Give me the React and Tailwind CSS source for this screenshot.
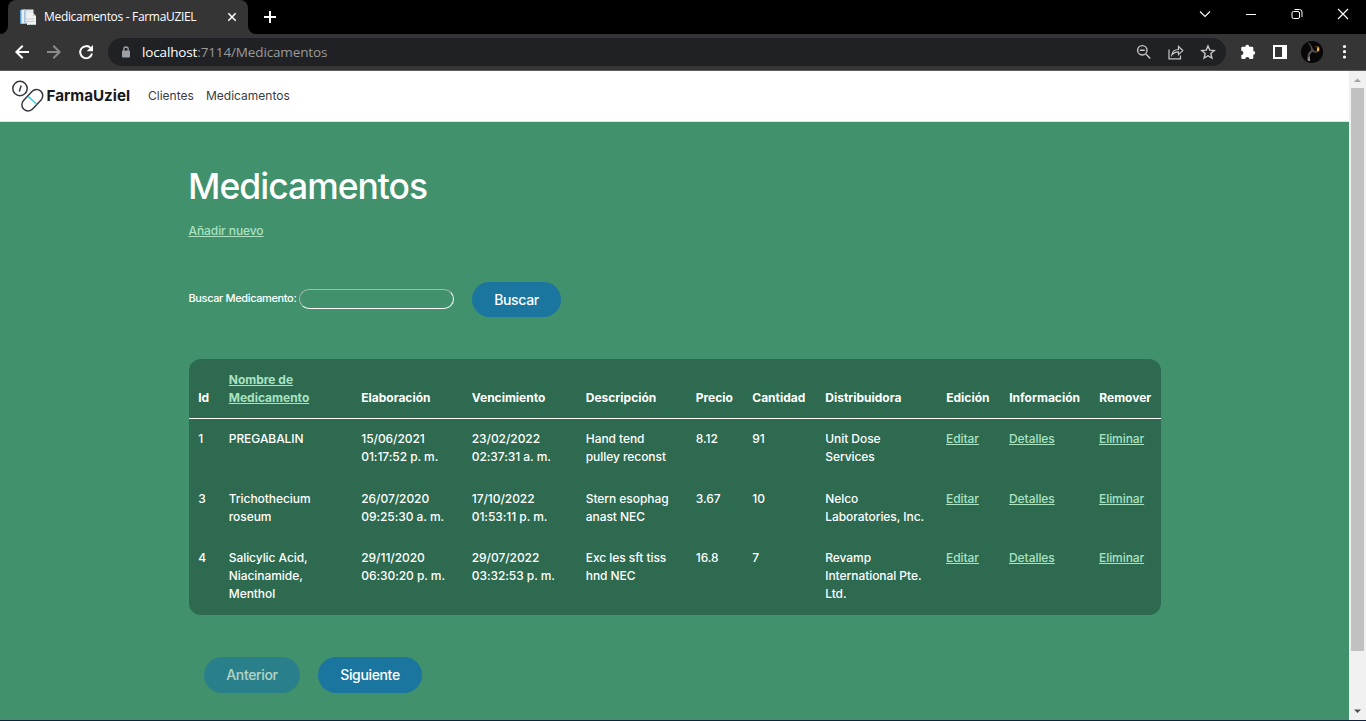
import React from "react";

const link = "text-[#aae2c2] underline underline-offset-[1px]";

const rows = [
  ["1", "PREGABALIN", "15/06/2021\n01:17:52 p. m.", "23/02/2022\n02:37:31 a. m.", "Hand tend\npulley reconst", "8.12", "91", "Unit Dose\nServices"],
  ["3", "Trichothecium\nroseum", "26/07/2020\n09:25:30 a. m.", "17/10/2022\n01:53:11 p. m.", "Stern esophag\nanast NEC", "3.67", "10", "Nelco\nLaboratories, Inc."],
  ["4", "Salicylic Acid,\nNiacinamide,\nMenthol", "29/11/2020\n06:30:20 p. m.", "29/07/2022\n03:32:53 p. m.", "Exc les sft tiss\nhnd NEC", "16.8", "7", "Revamp\nInternational Pte.\nLtd."],
];
const rowHeights = ["h-[60px]", "h-[59px]", "h-[76px]"];
const heads = ["Id", "Nombre de\nMedicamento", "Elaboración", "Vencimiento", "Descripción", "Precio", "Cantidad", "Distribuidora", "Edición", "Información", "Remover"];
const cols = "grid grid-cols-[30.5px_132.5px_110.5px_114px_110px_56.5px_73px_121px_63px_90px_71px]";

function TabStrip() {
  return (
    <div className="flex h-[34px] bg-black text-white">
      <svg width="8" height="34" className="shrink-0"><path d="M8 26v8H0a8 8 0 0 0 8-8Z" fill="#353535" /></svg>
      <div className="flex h-[34px] w-[240px] shrink-0 items-center rounded-t-lg bg-[#353535] pl-3 pr-[11px]">
        <svg width="16" height="17" viewBox="0 0 16 17" className="shrink-0">
          <path d="M0 1h5v14H0Z" fill="#5b9fd0" /><path d="M1.500 0.500H5v14H1.500Z" fill="#e3f0f8" />
          <path d="M4 .500h9.500v14H4Z" fill="#e3e7ea" /><path d="M4 1h1.500v14H4Z" fill="#a5c4da" />
          <path d="M7 4h6l3 3v9H7Z" fill="#f1f1f1" /><path d="M13 4v3h3Z" fill="#c3cacf" />
          <path d="M6.500 10h8M6.500 12.500h8M8 15.500h8" stroke="#c5cacf" />
        </svg>
        <span className="ml-2 w-[175px] whitespace-nowrap font-['Open_Sans',sans-serif] text-[12px] tracking-[-0.320px]">Medicamentos - FarmaUZIEL</span>
        <svg width="10" height="10" viewBox="0 0 10 10" className="ml-auto shrink-0"><path d="m1.300 1.300 7.400 7.400M8.700 1.300 1.300 8.700" stroke="#fff" strokeWidth="1.500" /></svg>
      </div>
      <svg width="8" height="34" className="shrink-0"><path d="M0 26v8h8a8 8 0 0 1-8-8Z" fill="#353535" /></svg>
      <svg width="12" height="12" viewBox="0 0 12 12" className="ml-2 mt-[11px]"><path d="M6 0v12M0 6h12" stroke="#fff" strokeWidth="2" /></svg>
      <svg width="168" height="34" viewBox="0 0 168 34" className="ml-auto" fill="none" stroke="#fff">
        <path d="m2 11.500 5 5 5-5" strokeWidth="1.100" />
        <path d="M48 14.500h10" />
        <path d="M95.500 11.500h4.500q1.500 0 1.500 1.500v4q0 1.500-1.500 1.500h-4.500q-1.500 0-1.500-1.500v-4q0-1.500 1.500-1.500Z M96.500 9.500h5q2.500 0 2.500 2.500v5" />
        <path d="m140 9 10 10m0-10-10 10" strokeWidth="1.200" />
      </svg>
    </div>
  );
}

function Toolbar() {
  return (
    <div className="flex h-[37px] items-center border-b border-[#5c5c5c] bg-[#353535] text-white">
      <svg width="108" height="36" viewBox="0 0 108 36" fill="none" className="shrink-0">
        <path d="M29 18H16.500m6.200-6.300L16.400 18l6.300 6.300" stroke="#fff" strokeWidth="2" />
        <path d="M47 18h12.500m-6.200-6.300 6.300 6.300-6.300 6.300" stroke="#8a8a8a" strokeWidth="2" />
        <path d="M90.700 14.200A6 6 0 1 0 92 19.500" stroke="#fff" strokeWidth="2" />
        <path d="M93 11v6.300h-6.300Z" fill="#fff" />
      </svg>
      <div className="flex h-[28px] w-[1118px] shrink-0 items-center rounded-full bg-[#202124]">
        <svg width="8" height="12" viewBox="0 0 8 12" className="ml-[14px]"><rect y="4.500" width="8" height="7" rx="1" fill="#9aa0a6" /><path d="M1.800 5V3.200a2.200 2.200 0 0 1 4.400 0V5" fill="none" stroke="#9aa0a6" strokeWidth="1.300" /></svg>
        <span className="ml-3 pt-px font-['Open_Sans',sans-serif] text-[13.500px] tracking-[-0.140px] text-[#9a9a9a]"><span className="text-white">localhost</span>:7114/Medicamentos</span>
        <svg width="90" height="28" viewBox="0 0 90 28" fill="none" stroke="#c8c8c8" strokeWidth="1.400" className="ml-auto">
          <circle cx="13.300" cy="12.300" r="4.700" /><path d="m16.800 16.100 4.500 4.400M10.800 12.300h5" />
          <path d="M40 11.500v9.300h11.500v-3.300M42.800 17c.6-4 3-5.500 6.700-5.500V8.500l4.300 4.100-4.300 4.100v-2.900c-3 0-4.900.9-6.700 3.200Z" strokeWidth="1.200" />
          <path d="m79 8 1.800 4.100 4.500.5-3.400 3 1 4.400-3.900-2.300-3.900 2.300 1-4.400-3.400-3 4.500-.5Z" />
        </svg>
        <div className="w-[7px]" />
      </div>
      <svg width="140" height="36" viewBox="0 0 140 36" className="shrink-0">
        <path d="M16.500 12.700h2.900a1.900 1.900 0 0 1 3.800 0h2.900q1.200 0 1.200 1.200v3a1.900 1.900 0 0 1 0 3.800v3q0 1.300-1.200 1.300h-2.700a2.100 2.100 0 0 0-4.200 0h-2.700q-1.200 0-1.200-1.300v-2.700a2.100 2.100 0 0 0 0-4.200v-2.900q0-1.200 1.200-1.200Z" fill="#fff" />
        <path d="M47 11h14v14H47Zm2 2v10h7V13Z" fill="#fff" fillRule="evenodd" />
        <circle cx="86" cy="18" r="11" fill="#080707" />
        <path d="M81 8.500q3.500.5 5 4.500t4 4l1 2-5-1-2 3-1 6-2-1 1-7 3-3q0-5-4-7.500Z" fill="#544c4c" />
        <path d="m88 12 5 .5 1 3-2 3-3-1 3-2-1-2Z" fill="#6a4915" /><path d="M91 13.500h2V17h-2Z" fill="#f1b437" />
        <path d="m82 24 1.500-2 .8 5h-2Z" fill="#94908c" />
        <circle cx="118.500" cy="12.500" r="1.600" fill="#fff" /><circle cx="118.500" cy="17.700" r="1.600" fill="#fff" /><circle cx="118.500" cy="23" r="1.600" fill="#fff" />
      </svg>
    </div>
  );
}

function Navbar() {
  return (
    <nav className="flex h-[51px] items-center border-b border-[#dee2e6] bg-white pl-3">
      <svg width="33" height="33" viewBox="0 0 33 33" fill="none" stroke="#35393d" strokeWidth="1.500">
        <circle cx="8" cy="8.500" r="7.200" /><path d="M9.200 5.500 7.300 11.500" />
        <rect x="-6.200" y="-12.400" width="12.400" height="24.800" rx="6.200" transform="translate(20.300 20.200) rotate(43)" />
        <path d="m16.200 16.400 8.400 7.900" stroke="#42cfdc" />
      </svg>
      <span className="ml-[1.500px] w-[101.500px] text-[15.200px] font-bold text-[#17191c]">FarmaUziel</span>
      <a className="w-[58px] text-[12px] text-[#3a3d42]">Clientes</a>
      <a className="text-[12px] text-[#3a3d42]">Medicamentos</a>
    </nav>
  );
}

function MedicineTable() {
  return (
    <div className="mt-[42px] h-[256px] w-[972px] overflow-hidden rounded-[12px] bg-[#2d6a4f] text-[12px] leading-[18px]">
      <div className={cols + " h-[60px] items-end border-b border-white pb-[11px] font-bold"}>
        {heads.map((h, i) => (
          <div key={h} className="whitespace-pre pl-[9.250px]"><span className={i === 1 ? link : ""}>{h}</span></div>
        ))}
      </div>
      <div className="pt-[11px] font-[450] tracking-[-0.060px]">
        {rows.map((r, n) => (
          <div key={r[0]} className={cols + " " + rowHeights[n]}>
            {r.map((c, i) => <div key={i} className="whitespace-pre pl-[9.250px]">{c}</div>)}
            {["Editar", "Detalles", "Eliminar"].map((a) => <div key={a} className="pl-[9px]"><a className={link}>{a}</a></div>)}
          </div>
        ))}
      </div>
    </div>
  );
}

export default function App() {
  return (
    <div className="flex h-[721px] w-[1366px] flex-col overflow-hidden border-b border-[#10203a] font-['Inter',sans-serif]">
      <TabStrip />
      <Toolbar />
      <div className="flex min-h-0 flex-1">
        <div className="flex w-[1349px] flex-col bg-[#40916c]">
          <Navbar />
          <main className="pl-[189px] pt-[43px] text-white">
            <h1 className="-ml-px text-[35.500px] font-medium leading-[44px] tracking-[-1px]">Medicamentos</h1>
            <p className="-ml-[0.5px] mt-[13px] text-[12px] font-[450] leading-[18px] tracking-[-0.080px]"><a className={link}>Añadir nuevo</a></p>
            <div className="mt-[42px] flex h-[35px] items-center">
              <label className="-ml-[0.5px] w-[110.5px] whitespace-nowrap pb-[3px] text-[11px] font-[450] tracking-[-0.370px]">Buscar Medicamento:</label>
              <input className="mb-[2px] h-[20px] w-[155px] rounded-[10px] border border-b-white border-l-[#a9b5af] border-r-white border-t-[#a9b5af] bg-transparent" />
              <button className="ml-[18px] h-[35px] w-[89px] rounded-full bg-[#1a759f] text-[14px] font-[450] tracking-[-0.350px]">Buscar</button>
            </div>
            <MedicineTable />
            <div className="ml-[15px] mt-[42px] flex gap-[18px] text-[14px] font-[450] tracking-[-0.350px]">
              <button className="h-[36px] w-[96px] rounded-full bg-[#1a759f] pb-px opacity-60">Anterior</button>
              <button className="h-[36px] w-[104px] rounded-full bg-[#1a759f] pb-px">Siguiente</button>
            </div>
          </main>
        </div>
        <div className="flex w-[17px] flex-col items-center bg-[#f1f1f1]">
          <svg width="17" height="17"><path d="M5 11h7L8.500 7.500Z" fill="#a3a3a3" /></svg>
          <div className="h-[563px] w-[13px] bg-[#c1c1c1]" />
          <svg width="17" height="17" className="mt-auto"><path d="M5 6.500h7L8.500 10Z" fill="#505050" /></svg>
        </div>
      </div>
    </div>
  );
}
